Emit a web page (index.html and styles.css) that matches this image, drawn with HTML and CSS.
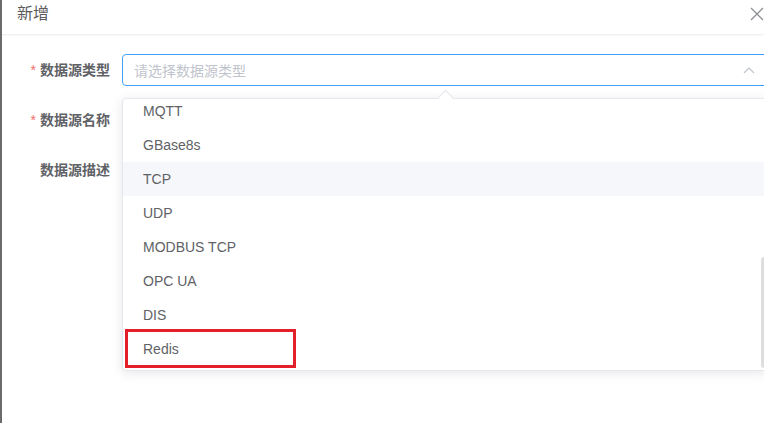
FILE: index.html
```html
<!DOCTYPE html>
<html lang="zh-CN">
<head>
    <meta charset="UTF-8">
    <meta name="viewport" content="width=device-width, initial-scale=1.0">
    <title>新增数据源</title>
    <link rel="stylesheet" href="styles.css">
</head>
<body>
    <div class="dialogo">
        <div class="dialogo-topo">
            <span class="dialogo-titulo">新增</span>
            <svg class="fechar" width="14" height="14" viewBox="0 0 14 14">
                <path d="M1 1 L13 13 M13 1 L1 13" stroke="#8c8e94" stroke-width="1.3" fill="none"/>
            </svg>
        </div>

        <form class="formulario">
            <div class="linha">
                <label class="rotulo obrigatorio">数据源类型</label>
                <div class="campo">
                    <div class="selecao ativa">
                        <span class="placeholder">请选择数据源类型</span>
                        <svg class="seta-cima" width="12" height="8" viewBox="0 0 12 8">
                            <path d="M1 7 L6 2 L11 7" stroke="#c0c4cc" stroke-width="1.2" fill="none"/>
                        </svg>
                    </div>
                </div>
            </div>
            <div class="linha">
                <label class="rotulo obrigatorio">数据源名称</label>
                <div class="campo"></div>
            </div>
            <div class="linha">
                <label class="rotulo">数据源描述</label>
                <div class="campo"></div>
            </div>
        </form>

        <!-- lista suspensa do select -->
        <div class="lista-suspensa">
            <div class="ponta"></div>
            <div class="lista-rolagem">
                <ul class="opcoes">
                    <li>MQTT</li>
                    <li>GBase8s</li>
                    <li class="hover">TCP</li>
                    <li>UDP</li>
                    <li>MODBUS TCP</li>
                    <li>OPC UA</li>
                    <li>DIS</li>
                    <li>Redis</li>
                </ul>
                <div class="barra-rolagem"></div>
            </div>
        </div>

        <div class="destaque"></div>
    </div>
</body>
</html>
```

FILE: styles.css
```css
:root {
    --cor-azul: #409eff;
    --cor-texto: #606266;
    --cor-placeholder: #c0c4cc;
    --cor-borda: #e4e7ed;
    --cor-hover: #f5f7fa;
    --cor-erro: #f56c6c;
}

html, body {
    margin: 0;
    height: 100%;
    overflow: hidden;
    background: #fff;
}

body {
    font-family: 'Liberation Sans', Arial, 'Noto Sans CJK SC', sans-serif;
    font-size: 14px;
    color: var(--cor-texto);
}

.dialogo {
    position: relative;
    height: 100%;
    border-left: 2px solid #6b6b6b;
    background: #fff;
}

.dialogo-topo {
    display: flex;
    align-items: center;
    justify-content: space-between;
    height: 34px;
    padding: 0 0 0 15px;
    border-bottom: 1px solid #f0f0f0;
    box-shadow: 0 1px 2px rgba(0, 0, 0, 0.03);
}

.dialogo-titulo {
    font-size: 16px;
    color: #5c5c5c;
    line-height: 1;
    margin-top: -6px;
}

.fechar {
    margin-top: -6px;
}

.formulario {
    padding-top: 19px;
    margin: 0;
}

.linha {
    display: flex;
    height: 32px;
    margin-bottom: 18px;
}

.rotulo {
    width: 120px;
    flex-shrink: 0;
    box-sizing: border-box;
    padding-right: 12px;
    text-align: right;
    line-height: 32px;
    font-weight: bold;
    color: var(--cor-texto);
}

.obrigatorio::before {
    content: '*';
    color: var(--cor-erro);
    margin-right: 4px;
    font-weight: normal;
}

.campo {
    width: 646px;
    flex-shrink: 0;
}

.selecao {
    display: flex;
    align-items: center;
    justify-content: space-between;
    height: 32px;
    box-sizing: border-box;
    padding: 0 12px 0 11px;
    border: 1px solid #dcdfe6;
    border-radius: 4px;
}

.selecao.ativa {
    border-color: var(--cor-azul);
}

.placeholder {
    color: var(--cor-placeholder);
}

.lista-suspensa {
    position: absolute;
    top: 98px;
    left: 120px;
    width: 646px;
    height: 273px;
    box-sizing: border-box;
    border: 1px solid var(--cor-borda);
    border-radius: 4px;
    background: #fff;
    box-shadow: 0 2px 12px rgba(0, 0, 0, 0.1);
}

.ponta {
    position: absolute;
    top: -7px;
    left: 317px;
    width: 10px;
    height: 10px;
    background: #fff;
    border-top: 1px solid var(--cor-borda);
    border-left: 1px solid var(--cor-borda);
    transform: rotate(45deg);
}

.lista-rolagem {
    position: relative;
    height: 100%;
    overflow: hidden;
}

.opcoes {
    list-style: none;
    margin: -5px 0 0;
    padding: 0;
}

.opcoes li {
    height: 34px;
    line-height: 34px;
    padding: 0 20px;
    color: var(--cor-texto);
}

.opcoes li.hover {
    background: var(--cor-hover);
}

.barra-rolagem {
    position: absolute;
    right: 0;
    top: 158px;
    width: 6px;
    height: 111px;
    border-radius: 4px;
    background: rgba(144, 147, 153, 0.3);
}

/* marcação vermelha em volta da opção */
.destaque {
    position: absolute;
    top: 329px;
    left: 123px;
    width: 165px;
    height: 33px;
    border: 3px solid #e3202a;
}
```
